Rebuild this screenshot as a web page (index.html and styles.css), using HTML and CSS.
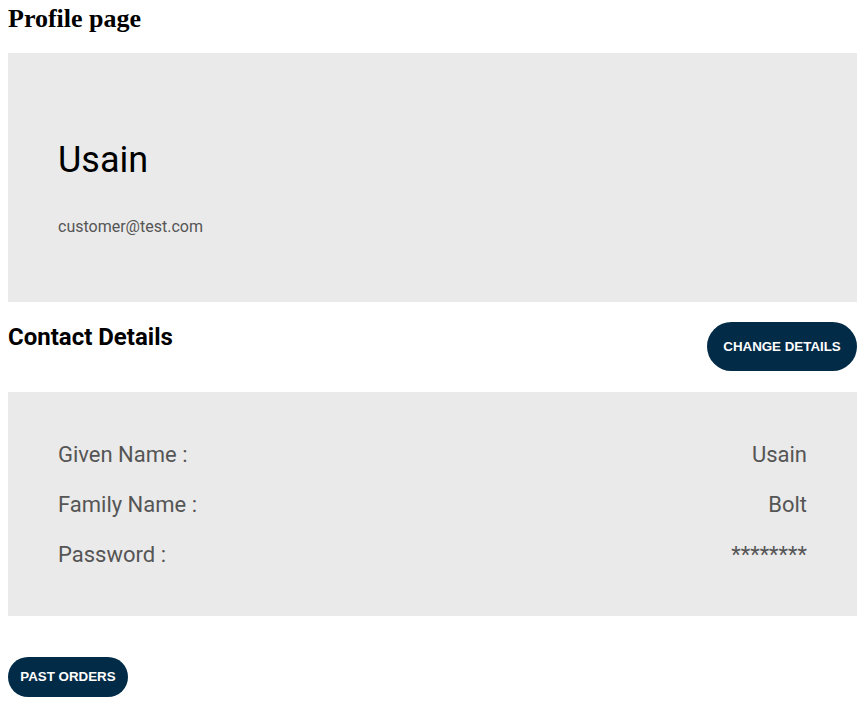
FILE: index.html
```html
<!DOCTYPE html>
<html lang="en">
<head>
<meta charset="utf-8">
<title>Profile page</title>
<link rel="stylesheet" href="styles.css">
</head>
<body>
<h1 class="page-title">Profile page</h1>
<section class="profile-card">
  <h2 class="profile-name">Usain</h2>
  <p class="profile-email">customer@test.com</p>
</section>
<div class="contact-head">
  <h3 class="contact-title">Contact Details</h3>
  <button class="pill-btn change-btn">CHANGE DETAILS</button>
</div>
<section class="details-card">
  <div class="detail-row"><span>Given Name :</span><span>Usain</span></div>
  <div class="detail-row"><span>Family Name :</span><span>Bolt</span></div>
  <div class="detail-row"><span>Password :</span><span>********</span></div>
</section>
<button class="pill-btn orders-btn">PAST ORDERS</button>
</body>
</html>
```
FILE: styles.css
```css
* { box-sizing: border-box; }
body {
  margin: 8px 10px 8px 8px;
  font-family: Roboto, "Liberation Sans", sans-serif;
  background: #fff;
}
.page-title {
  margin: 0;
  font-family: "Liberation Serif", "DejaVu Serif", serif;
  font-weight: 700;
  font-size: 26px;
  line-height: 22px;
  height: 45px;
}
.profile-card {
  background: #eaeaea;
  padding: 86px 50px 66px;
  display: flex;
  flex-direction: column;
}
.profile-name {
  margin: 0 0 36px;
  font-size: 36px;
  font-weight: 400;
  line-height: 42px;
  color: #000;
}
.profile-email {
  margin: 0;
  font-size: 16px;
  line-height: 19px;
  color: #555;
}
.contact-head {
  display: flex;
  justify-content: space-between;
  align-items: flex-start;
  margin-top: 20px;
}
.contact-title {
  margin: 0;
  padding-top: 1px;
  font-size: 24px;
  font-weight: 700;
  line-height: 28px;
  color: #000;
}
.pill-btn {
  border: 0;
  background: #022b47;
  color: #fff;
  font-family: "Liberation Sans", Arial, sans-serif;
  font-weight: 700;
  font-size: 13.33px;
  line-height: 16px;
  border-radius: 999px;
  cursor: pointer;
}
.change-btn {
  height: 49px;
  width: 150px;
  padding: 0;
}
.details-card {
  margin-top: 21px;
  background: #eaeaea;
  padding: 38px 50px 36px;
  display: flex;
  flex-direction: column;
}
.detail-row {
  display: flex;
  justify-content: space-between;
  font-size: 22px;
  line-height: 50px;
  color: #555;
}
.orders-btn {
  margin-top: 41px;
  height: 40px;
  width: 120px;
  padding: 0;
}
```
